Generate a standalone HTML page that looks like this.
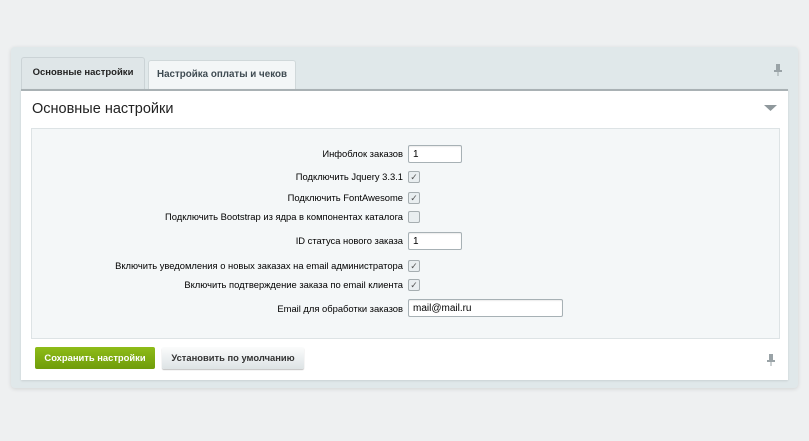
<!DOCTYPE html>
<html><head><meta charset="utf-8"><style>
body{margin:0;width:809px;height:441px;background:#eef0f1;font-family:"Liberation Sans",Arial,sans-serif;position:relative;overflow:hidden}
.outer{position:absolute;left:11px;top:47px;width:787px;height:341px;background:#e0e8ea;border-radius:4px;box-shadow:0 1px 4px rgba(0,0,0,.12)}
.tab{position:absolute;font-size:10px;color:#333;text-align:center;line-height:30px;border-radius:3px 3px 0 0}
.t1{left:10px;top:10px;width:122px;height:32px;background:#dfe6e8;border:1px solid #cbd3d6;border-bottom:none;font-weight:bold;color:#222;font-size:9.5px}
.t2{left:137px;top:13px;width:146px;height:28px;line-height:27px;background:#f3f6f7;border:1px solid #d0d8da;border-bottom:none;color:#3f4b52;font-size:9.8px;font-weight:bold}
.inner{position:absolute;left:10px;top:42px;width:767px;height:289px;background:#fff;border-top:2px solid #a9b1b4;box-shadow:0 1px 2px rgba(0,0,0,.1)}
h1{position:absolute;left:11px;top:10px;margin:0;font-weight:normal;font-size:14.5px;color:#222}
.grey{position:absolute;left:10px;top:37px;width:747px;height:209px;background:#f4f7f8;border:1px solid #dde3e5}
.row{position:absolute;right:376px;font-size:9.4px;color:#000;text-align:right;white-space:nowrap}
.cb{position:absolute;left:376px;width:10px;height:10px;border:1px solid #a6aeb1;border-radius:2px;background:#e9eef0;font-size:9px;line-height:10px;text-align:center;color:#555}
.inp{position:absolute;left:376px;height:18px;border:1px solid #a7b1b5;border-radius:2px;background:#fff;font-size:10px;line-height:17px;padding-left:4px;box-sizing:border-box;box-shadow:inset 0 1px 1px rgba(0,0,0,.08)}
.b1{position:absolute;left:14px;top:256px;width:120px;height:22px;background:linear-gradient(#8ebc18,#6f9c0a);border-radius:2px;color:#fff;font-size:9.4px;font-weight:bold;text-align:center;line-height:22px}
.b2{position:absolute;left:141px;top:256px;width:142px;height:22px;background:linear-gradient(#fbfcfc,#dde3e5);border-radius:2px;color:#333;font-size:9.4px;font-weight:bold;text-align:center;line-height:22px;box-shadow:0 1px 1px rgba(0,0,0,.25)}
</style></head><body>
<div class="outer">
<div class="tab t1">Основные настройки</div>
<div class="tab t2">Настройка оплаты и чеков</div>
<svg style="position:absolute;left:762px;top:16px" width="10" height="14"><rect x="3" y="1" width="4" height="7" fill="#9aa3a7"/><rect x="1" y="7" width="8" height="2" fill="#9aa3a7"/><rect x="4.5" y="9" width="1" height="4" fill="#9aa3a7"/></svg>
<div class="inner">
<h1>Основные настройки</h1>
<svg style="position:absolute;left:743px;top:14px" width="13" height="7"><path d="M0 0H13L6.5 6Z" fill="#8f989c"/></svg>
<div class="grey">
<div class="row" style="top:19px">Инфоблок заказов</div><div class="inp" style="top:16px;width:54px">1</div>
<div class="row" style="top:42px">Подключить Jquery 3.3.1</div><div class="cb" style="top:42px">✓</div>
<div class="row" style="top:63px">Подключить FontAwesome</div><div class="cb" style="top:63px">✓</div>
<div class="row" style="top:82px">Подключить Bootstrap из ядра в компонентах каталога</div><div class="cb" style="top:82px"></div>
<div class="row" style="top:106px">ID статуса нового заказа</div><div class="inp" style="top:103px;width:54px">1</div>
<div class="row" style="top:131px">Включить уведомления о новых заказах на email администратора</div><div class="cb" style="top:131px">✓</div>
<div class="row" style="top:150px">Включить подтверждение заказа по email клиента</div><div class="cb" style="top:150px">✓</div>
<div class="row" style="top:174px">Email для обработки заказов</div><div class="inp" style="top:170px;width:155px">mail@mail.ru</div>
</div>
<div class="b1">Сохранить настройки</div>
<div class="b2">Установить по умолчанию</div>
<svg style="position:absolute;left:745px;top:262px" width="10" height="14"><rect x="3" y="1" width="4" height="7" fill="#9aa3a7"/><rect x="1" y="7" width="8" height="2" fill="#9aa3a7"/><rect x="4.5" y="9" width="1" height="4" fill="#9aa3a7"/></svg>
</div>
</div>
</body></html>
